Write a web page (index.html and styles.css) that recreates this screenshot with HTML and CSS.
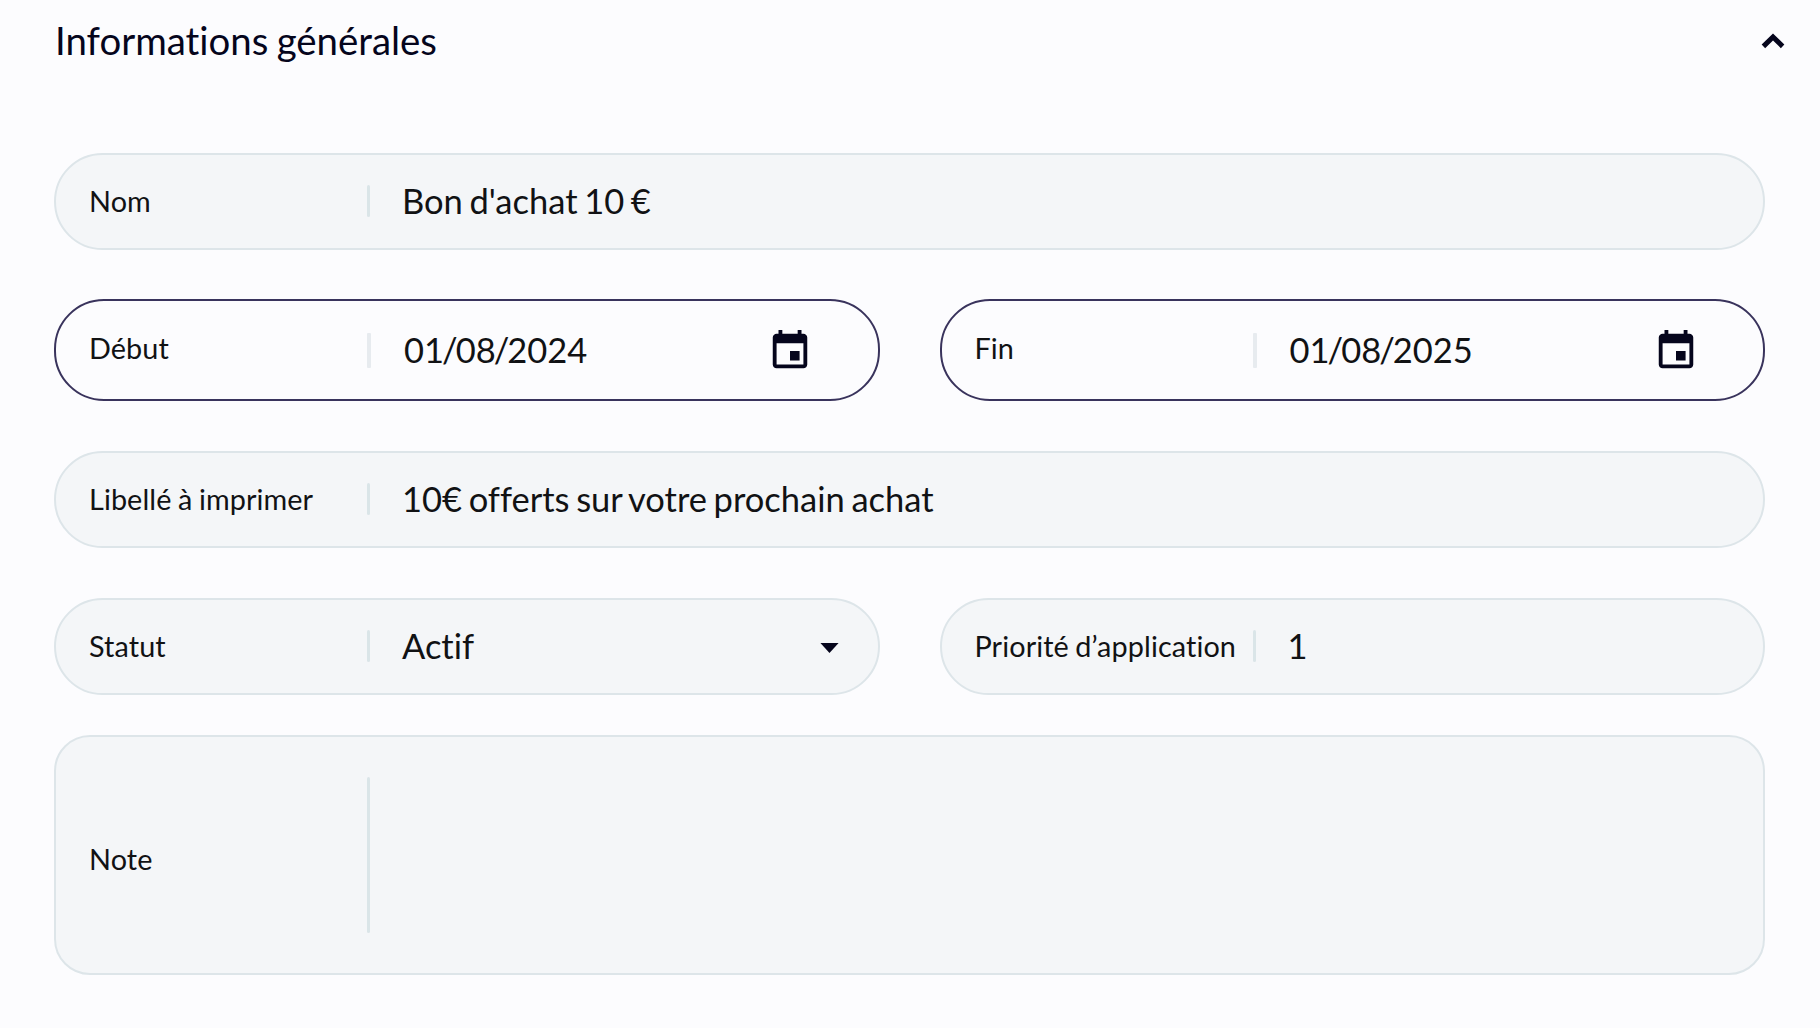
FILE: index.html
```html
<!DOCTYPE html>
<html lang="fr">
<head>
  <meta charset="UTF-8">
  <meta name="viewport" content="width=device-width, initial-scale=1.0">
  <title>Informations générales</title>
  <link rel="stylesheet" href="styles.css">
</head>
<body>

<section class="panel">
  <header class="panel-header">
    <h1>Informations générales</h1>
    <svg class="chevron" viewBox="0 0 24 16"><path d="M2.4 13.4 12 3.9l9.6 9.5" fill="none" stroke="currentColor" stroke-width="5"/></svg>
  </header>

  <div class="form">
    <div class="field full">
      <span class="label">Nom</span>
      <span class="value">Bon d'achat 10 €</span>
    </div>

    <div class="field date">
      <span class="label">Début</span>
      <span class="value">01<span class="slash">/</span>08<span class="slash">/</span>2024</span>
      <svg class="calendar" viewBox="0 0 24 24"><path fill="currentColor" d="M17 12h-5v5h5v-5zM16 1v2H8V1H6v2H5c-1.11 0-1.99.9-1.99 2L3 19c0 1.1.89 2 2 2h14c1.1 0 2-.9 2-2V5c0-1.1-.9-2-2-2h-1V1h-2zm3 18H5V8h14v11z"/></svg>
    </div>
    <div class="field date">
      <span class="label">Fin</span>
      <span class="value">01<span class="slash">/</span>08<span class="slash">/</span>2025</span>
      <svg class="calendar" viewBox="0 0 24 24"><path fill="currentColor" d="M17 12h-5v5h5v-5zM16 1v2H8V1H6v2H5c-1.11 0-1.99.9-1.99 2L3 19c0 1.1.89 2 2 2h14c1.1 0 2-.9 2-2V5c0-1.1-.9-2-2-2h-1V1h-2zm3 18H5V8h14v11z"/></svg>
    </div>

    <div class="field full">
      <span class="label">Libellé à imprimer</span>
      <span class="value">10€ offerts sur votre prochain achat</span>
    </div>

    <div class="field">
      <span class="label">Statut</span>
      <span class="value">Actif</span>
      <svg class="caret" viewBox="0 0 20 11"><path fill="currentColor" d="M0 0h20L10 11z"/></svg>
    </div>
    <div class="field">
      <span class="label">Priorité d’application</span>
      <span class="value">1</span>
    </div>
  </div>

  <div class="field note">
    <span class="label">Note</span>
    <span class="value"></span>
  </div>
</section>

</body>
</html>
```

FILE: styles.css
```css
* {
  box-sizing: border-box;
}

body {
  margin: 0;
  background-color: #fcfcfe;
  font-family: Lato, "Liberation Sans", sans-serif;
  font-variant-ligatures: none;
  color: #111214;
}

.panel {
  padding: 0 55px 0 54px;
}

.panel-header {
  display: flex;
  justify-content: space-between;
  align-items: center;
  height: 82px;
  margin-right: -19.5px;
  color: #05051c;
}

h1 {
  margin: 0;
  padding: 0 0 2px 1px;
  font-size: 38.4px;
  font-weight: 400;
  line-height: 46px;
  word-spacing: -1.5px;
}

.chevron {
  width: 24px;
  height: 16px;
}

.form {
  display: grid;
  grid-template-columns: 1fr 1fr;
  grid-template-rows: 97px 101px 97px 97px;
  column-gap: 60px;
  row-gap: 50px;
  margin-top: 71px;
}

.field {
  display: flex;
  align-items: center;
  padding: 0 33px 2px;
  border: 2px solid #dde5e9;
  border-radius: 50px;
  background-color: #f4f6f8;
}

.full {
  grid-column: 1 / -1;
}

.label {
  flex: none;
  width: 278px;
  font-size: 28.8px;
  line-height: 36px;
  letter-spacing: 0.1px;
  word-spacing: -1px;
  white-space: nowrap;
}

.value {
  display: flex;
  align-items: center;
  flex: 1;
  font-size: 34.5px;
  line-height: 42px;
  word-spacing: -2.2px;
  white-space: nowrap;
}

/* vertical bar between the label and the value */
.value::before {
  content: "";
  width: 3px;
  height: 32px;
  margin-right: 32px;
  border-radius: 2px;
  background-color: #dae5e8;
}

.date {
  margin-top: -1px;
  padding-bottom: 0;
  border-color: #39335c;
  background-color: #fcfcfe;
}

.date .label {
  padding-bottom: 4px;
}

.date .value::before {
  width: 4px;
  height: 35px;
  margin-right: 33px;
  border-radius: 1px;
  background-color: #e7ebef;
}

.slash {
  margin: 0 -2px;
}

.calendar {
  width: 46px;
  height: 46px;
  margin: 1px 31.5px 0 0;
  color: #05051c;
}

.caret {
  width: 19px;
  height: 10px;
  margin: 5px 6px 0 0;
  color: #05051c;
}

.note {
  height: 240px;
  margin-top: 40px;
  padding-bottom: 0;
  border-radius: 36px;
}

.note .label {
  padding-top: 8px;
}

.note .value::before {
  height: 156px;
}
```
